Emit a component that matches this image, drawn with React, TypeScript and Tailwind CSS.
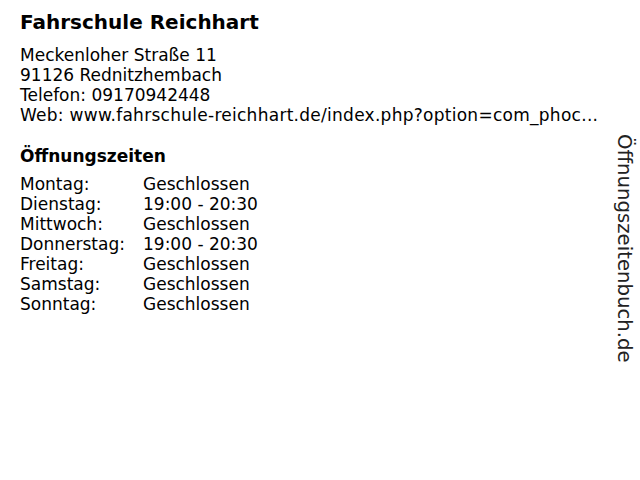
import React from "react";

const hours: [string, string][] = [
  ["Montag:", "Geschlossen"],
  ["Dienstag:", "19:00 - 20:30"],
  ["Mittwoch:", "Geschlossen"],
  ["Donnerstag:", "19:00 - 20:30"],
  ["Freitag:", "Geschlossen"],
  ["Samstag:", "Geschlossen"],
  ["Sonntag:", "Geschlossen"],
];

export default function App() {
  return (
    <div className="w-[640px] h-[480px] bg-white text-black flex" style={{ fontFamily: '"DejaVu Sans", Verdana, sans-serif' }}>
      <div className="w-[600px] pl-5 pt-[10px] min-w-0">
        <h1 className="text-[20px] leading-[24px] font-bold">Fahrschule Reichhart</h1>
        <div className="mt-[11px] text-[17px] leading-5">
          <div>Meckenloher Straße 11</div>
          <div>91126 Rednitzhembach</div>
          <div>Telefon: 09170942448</div>
          <div className="whitespace-nowrap tracking-[0.27px]">Web: www.fahrschule-reichhart.de/index.php?option=com_phoc...</div>
        </div>
        <h2 className="mt-[21px] text-[17px] leading-5 font-bold">Öffnungszeiten</h2>
        <div className="mt-2 grid grid-cols-[123px_auto] text-[17px] leading-5">
          {hours.map(([d, t]) => (
            <React.Fragment key={d}>
              <div>{d}</div>
              <div>{t}</div>
            </React.Fragment>
          ))}
        </div>
      </div>
      <div className="flex-1 pt-[134px] pl-2 flex justify-center">
        <div className="text-[19.7px] leading-6 text-[#222]" style={{ writingMode: "vertical-rl" }}>
          Öffnungszeitenbuch.de
        </div>
      </div>
    </div>
  );
}
